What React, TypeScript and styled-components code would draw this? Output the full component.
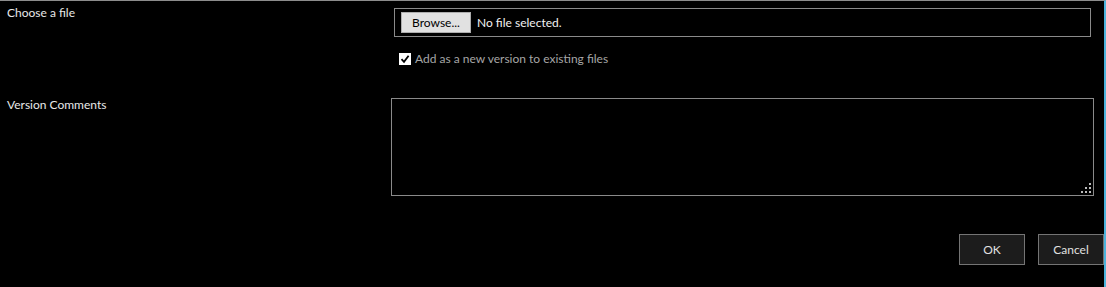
import React from 'react'
import styled, { createGlobalStyle } from 'styled-components'

const GlobalStyle = createGlobalStyle`
  html, body {
    margin: 0;
    padding: 0;
    background: #000;
  }
  body {
    font-family: 'Lato', 'Noto Sans', sans-serif;
  }
`

const Dialog = styled.div`
  box-sizing: border-box;
  width: 1106px;
  height: 287px;
  background: #000;
  border-top: 1px solid #8c8c8c;
  border-right: 2px solid #4cb4dc;
  display: flex;
  flex-direction: column;
  color: #e6e6e6;
  font-size: 12px;
`

const FormRow = styled.div<{ $top: number }>`
  display: grid;
  grid-template-columns: 391px 1fr;
  align-items: start;
  margin-top: ${(p) => p.$top}px;
`

const Label = styled.div<{ $offset: number }>`
  padding-left: 7px;
  margin-top: ${(p) => p.$offset}px;
  line-height: 12px;
  color: #e8e8e8;
`

const FieldColumn = styled.div`
  display: flex;
  flex-direction: column;
`

const FileBox = styled.div`
  box-sizing: border-box;
  margin-left: 3px;
  width: 697px;
  height: 29px;
  border: 1px solid #8a8a8a;
  display: flex;
  align-items: center;
  padding-left: 6px;
  gap: 6px;
`

const BrowseButton = styled.button`
  box-sizing: border-box;
  width: 70px;
  height: 21px;
  padding: 0;
  background: #e1e1e1;
  border: 1px solid #adadad;
  color: #000;
  font-family: inherit;
  font-size: 12px;
`

const FileName = styled.span`
  font-size: 12px;
  color: #f2f2f2;
`

const CheckRow = styled.label`
  display: flex;
  align-items: center;
  gap: 4px;
  margin-top: 15px;
  margin-left: 8px;
  font-size: 12px;
  line-height: 14px;
  color: #a6a6a6;
`

const CheckBox = styled.span`
  box-sizing: border-box;
  width: 12px;
  height: 12px;
  background: #fff;
  display: flex;
  align-items: center;
  justify-content: center;
`

const CommentBox = styled.div`
  position: relative;
  box-sizing: border-box;
  width: 703px;
  height: 98px;
  border: 1px solid #8a8a8a;
`

const CommentInput = styled.textarea`
  box-sizing: border-box;
  width: 100%;
  height: 100%;
  background: transparent;
  border: none;
  outline: none;
  resize: none;
  color: #eee;
  font-family: inherit;
`

const Grip = styled.svg`
  position: absolute;
  right: 1px;
  bottom: 1px;
`

const ButtonBar = styled.div`
  display: flex;
  justify-content: flex-end;
  gap: 13px;
  margin-top: 38px;
`

const ActionButton = styled.button`
  box-sizing: border-box;
  width: 66px;
  height: 31px;
  background: #1c1c1c;
  border: 1px solid #747474;
  color: #e0e0e0;
  font-family: inherit;
  font-size: 12px;
  padding: 0;
`

export default function App() {
  return (
    <>
      <GlobalStyle />
      <Dialog>
        <FormRow $top={7}>
          <Label $offset={-1}>Choose a file</Label>
          <FieldColumn>
            <FileBox>
              <BrowseButton>Browse...</BrowseButton>
              <FileName>No file selected.</FileName>
            </FileBox>
            <CheckRow>
              <CheckBox>
                <svg width="10" height="10" viewBox="0 0 10 10">
                  <path d="M1.5 5.2 L4 7.8 L8.6 1.8" fill="none" stroke="#000" strokeWidth="1.8" />
                </svg>
              </CheckBox>
              Add as a new version to existing files
            </CheckRow>
          </FieldColumn>
        </FormRow>

        <FormRow $top={32}>
          <Label $offset={1}>Version Comments</Label>
          <CommentBox>
            <CommentInput />
            <Grip width="12" height="12" viewBox="0 0 12 12">
              <rect x="9" y="1" width="2" height="2" fill="#bbb" />
              <rect x="5" y="5" width="2" height="2" fill="#bbb" />
              <rect x="9" y="5" width="2" height="2" fill="#bbb" />
              <rect x="1" y="9" width="2" height="2" fill="#bbb" />
              <rect x="5" y="9" width="2" height="2" fill="#bbb" />
              <rect x="9" y="9" width="2" height="2" fill="#bbb" />
            </Grip>
          </CommentBox>
        </FormRow>

        <ButtonBar>
          <ActionButton>OK</ActionButton>
          <ActionButton>Cancel</ActionButton>
        </ButtonBar>
      </Dialog>
    </>
  )
}
